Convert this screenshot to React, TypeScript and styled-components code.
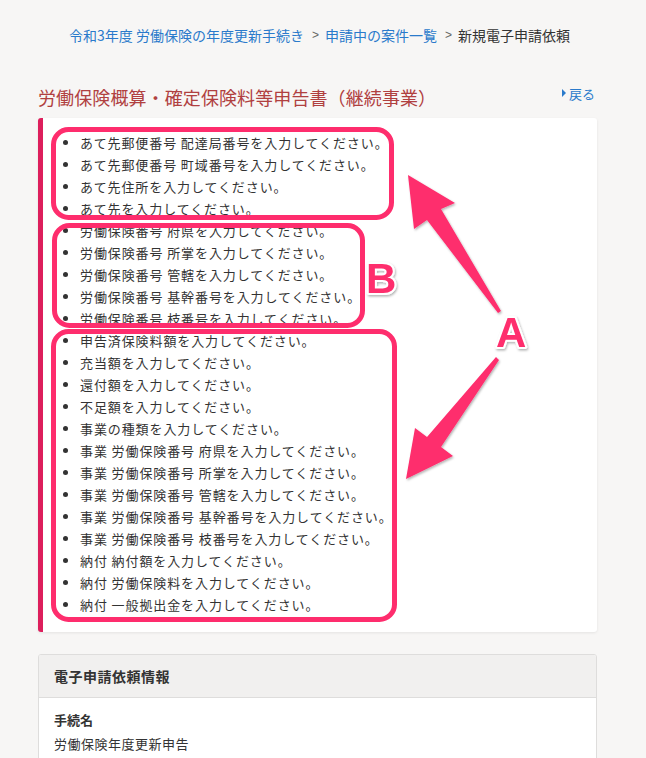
import React from "react";
import styled, { createGlobalStyle } from "styled-components";

const GlobalStyle = createGlobalStyle`
  html, body { margin: 0; padding: 0; }
  body {
    background: #f7f6f5;
    font-family: "Noto Sans CJK JP", "Noto Sans", sans-serif;
    color: #333;
  }
`;

const Page = styled.div`
  position: relative;
  width: 646px;
  min-height: 758px;
  box-sizing: border-box;
  padding: 25px 49px 0 38px;
`;

const Breadcrumb = styled.nav`
  display: flex;
  align-items: center;
  margin-left: 31px;
  font-size: 14px;
  line-height: 20px;
  white-space: nowrap;
`;

const Crumb = styled.a<{ $current?: boolean }>`
  color: ${(p) => (p.$current ? "#333" : "#2a7acb")};
  text-decoration: none;
`;

const Sep = styled.span`
  color: #666;
  font-size: 12px;
  margin: 0 6px 0 8px;
  font-family: "Liberation Sans", sans-serif;
`;

const TitleRow = styled.div`
  display: flex;
  justify-content: space-between;
  align-items: center;
  margin-top: 39px;
  height: 26px;
`;

const Title = styled.h1`
  margin: 0;
  font-size: 18px;
  font-weight: normal;
  line-height: 26px;
  color: #b04040;
  letter-spacing: 0.1px;
`;

const BackLink = styled.a`
  display: flex;
  align-items: center;
  gap: 3px;
  color: #2a7acb;
  font-size: 13px;
  text-decoration: none;
  margin-right: 2px;
  margin-top: -8px;
`;

const Tri = styled.span`
  width: 0;
  height: 0;
  border-top: 4px solid transparent;
  border-bottom: 4px solid transparent;
  border-left: 4px solid #2a7acb;
`;

const ErrorCard = styled.div`
  margin-top: 8px;
  background: #fff;
  border-left: 5px solid #dd1f5c;
  border-radius: 3px;
  box-shadow: 0 1px 3px rgba(0, 0, 0, 0.08);
  padding: 14px 0 16px 10px;
`;

const ErrorList = styled.ul`
  margin: 0;
  padding-left: 27px;
  font-size: 13px;
  line-height: 22px;
  color: #333;
  letter-spacing: 0.9px;
`;

const Panel = styled.section`
  margin-top: 22px;
  background: #fff;
  border: 1px solid #dedddc;
  border-radius: 3px;
  overflow: hidden;
`;

const PanelHeader = styled.div`
  height: 42px;
  display: flex;
  align-items: center;
  padding-left: 15px;
  background: #f1f0ef;
  border-bottom: 1px solid #dedddc;
  font-size: 14px;
  font-weight: bold;
  color: #333;
  letter-spacing: 0.5px;
`;

const PanelBody = styled.div`
  padding: 12px 15px 20px;
  font-size: 13px;
  line-height: 20px;
`;

const FieldLabel = styled.div`
  font-weight: bold;
  color: #333;
`;

const FieldValue = styled.div`
  margin-top: 4px;
  color: #333;
  letter-spacing: 0.5px;
`;

const Overlay = styled.svg`
  position: absolute;
  top: 0;
  left: 0;
  pointer-events: none;
  overflow: visible;
`;

const errors = [
  "あて先郵便番号 配達局番号を入力してください。",
  "あて先郵便番号 町域番号を入力してください。",
  "あて先住所を入力してください。",
  "あて先を入力してください。",
  "労働保険番号 府県を入力してください。",
  "労働保険番号 所掌を入力してください。",
  "労働保険番号 管轄を入力してください。",
  "労働保険番号 基幹番号を入力してください。",
  "労働保険番号 枝番号を入力してください。",
  "申告済保険料額を入力してください。",
  "充当額を入力してください。",
  "還付額を入力してください。",
  "不足額を入力してください。",
  "事業の種類を入力してください。",
  "事業 労働保険番号 府県を入力してください。",
  "事業 労働保険番号 所掌を入力してください。",
  "事業 労働保険番号 管轄を入力してください。",
  "事業 労働保険番号 基幹番号を入力してください。",
  "事業 労働保険番号 枝番号を入力してください。",
  "納付 納付額を入力してください。",
  "納付 労働保険料を入力してください。",
  "納付 一般拠出金を入力してください。",
];

const PINK = "#fe2d6d";

function Annotations() {
  return (
    <Overlay width={646} height={758} viewBox="0 0 646 758">
      <defs>
        <filter id="sh" x="-20%" y="-20%" width="140%" height="140%">
          <feDropShadow dx="1" dy="1.5" stdDeviation="1" floodColor="#000" floodOpacity="0.3" />
        </filter>
      </defs>
      <g fill="none" stroke={PINK} strokeWidth={5}>
        <rect x={53.5} y={129.5} width={338} height={88} rx={15} />
        <rect x={54.5} y={225.5} width={308} height={100} rx={15} />
        <rect x={53.5} y={331.5} width={341} height={288} rx={15} />
      </g>
      <g fill={PINK} filter="url(#sh)">
        <polygon points="408,175 455,203 441,209 501,311 498,313 427,220 414,229" />
        <polygon points="406,479 415,428 427,437 496,357 499,360 441,447 453,456" />
      </g>
      <g
        fontFamily="'Liberation Sans', 'DejaVu Sans', sans-serif"
        fontWeight="bold"
        fontSize={42}
        fill={PINK}
        stroke="#fff"
        strokeWidth={4}
        strokeLinejoin="round"
        paintOrder="stroke"
        filter="url(#sh)"
      >
        <text x={366} y={293}>B</text>
        <text x={496} y={347}>A</text>
      </g>
    </Overlay>
  );
}

export default function App() {
  return (
    <>
      <GlobalStyle />
      <Page>
        <Breadcrumb>
          <Crumb href="#">令和3年度 労働保険の年度更新手続き</Crumb>
          <Sep>&gt;</Sep>
          <Crumb href="#">申請中の案件一覧</Crumb>
          <Sep>&gt;</Sep>
          <Crumb $current>新規電子申請依頼</Crumb>
        </Breadcrumb>
        <TitleRow>
          <Title>労働保険概算・確定保険料等申告書（継続事業）</Title>
          <BackLink href="#">
            <Tri />
            戻る
          </BackLink>
        </TitleRow>
        <ErrorCard>
          <ErrorList>
            {errors.map((e, i) => (
              <li key={i}>{e}</li>
            ))}
          </ErrorList>
        </ErrorCard>
        <Panel>
          <PanelHeader>電子申請依頼情報</PanelHeader>
          <PanelBody>
            <FieldLabel>手続名</FieldLabel>
            <FieldValue>労働保険年度更新申告</FieldValue>
          </PanelBody>
        </Panel>
        <Annotations />
      </Page>
    </>
  );
}
